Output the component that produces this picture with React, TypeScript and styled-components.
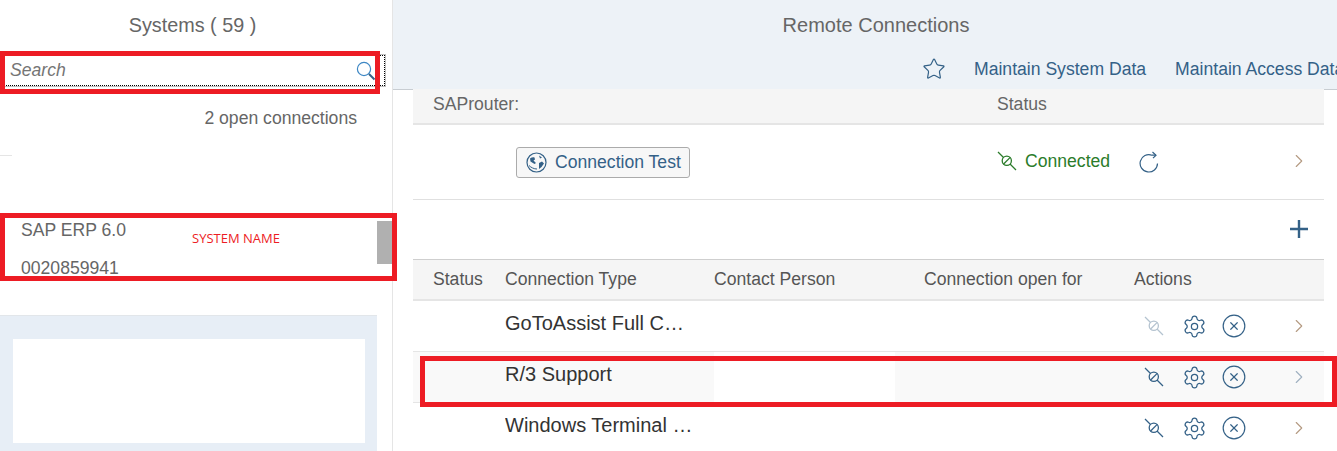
import React from 'react';
import styled, { createGlobalStyle } from 'styled-components';
import { Settings, CircleX, ChevronRight, Star } from 'lucide-react';

const GlobalStyle = createGlobalStyle`
  html, body {
    margin: 0;
    padding: 0;
    background: #fff;
    font-family: "Liberation Sans", Arial, sans-serif;
  }
`;

const Page = styled.div`
  display: grid;
  grid-template-columns: 393px 1fr;
  grid-template-rows: 451px;
  width: 1337px;
  height: 451px;
  overflow: hidden;
  position: relative;
`;

const LeftPanel = styled.div`
  border-right: 1px solid #e5e5e5;
  display: flex;
  flex-direction: column;
  min-width: 0;
`;

const LeftTitle = styled.div`
  height: 50px;
  padding-right: 7px;
  display: flex;
  align-items: center;
  justify-content: center;
  font-size: 19.8px;
  color: #666;
`;

const SearchRow = styled.div`
  position: relative;
  margin: 4px 6px 0 0;
  height: 31px;
  border: 1px solid #bfbfbf;
  border-left: none;
  outline: 1px dotted #000;
  outline-offset: -2px;
  display: flex;
  align-items: center;
  justify-content: space-between;
  padding: 0 9px 0 10px;
`;

const SearchText = styled.span`
  font-size: 17.6px;
  font-style: italic;
  color: #757575;
`;

const OpenCount = styled.div`
  margin-top: 21px;
  padding-right: 35px;
  text-align: right;
  font-size: 17.6px;
  line-height: 20px;
  color: #666;
`;

const ShortRule = styled.div`
  width: 12px;
  height: 1px;
  margin-top: 27px;
  background: #e5e5e5;
`;

const SystemItem = styled.div`
  position: relative;
  margin-top: 65px;
  height: 94px;
  display: flex;
  justify-content: space-between;
  align-items: flex-start;
`;

const SystemText = styled.div`
  padding-left: 21px;
  font-size: 17.6px;
  line-height: 38px;
  color: #666;
  margin-top: -10px;
`;

const ScrollThumb = styled.div`
  width: 15px;
  height: 43px;
  background: #b0b0b0;
`;

const Preview = styled.div`
  width: 377px;
  flex: 1;
  box-sizing: border-box;
  border-top: 1px solid #e2e6ea;
  background: #e7eef6;
  padding: 23px 12px 8px 13px;
  display: flex;
`;

const PreviewCard = styled.div`
  flex: 1;
  background: #fff;
`;

const RightPanel = styled.div`
  display: flex;
  flex-direction: column;
  min-width: 0;
  overflow: hidden;
`;

const RightHeader = styled.div`
  height: 90px;
  box-sizing: border-box;
  flex: none;
  background: #edf2f7;
  border-bottom: 1px solid #c8cdd2;
  display: flex;
  flex-direction: column;
`;

const RightTitle = styled.div`
  height: 50px;
  padding-left: 22px;
  display: flex;
  align-items: center;
  justify-content: center;
  font-size: 20px;
  color: #666;
`;

const Toolbar = styled.div`
  display: flex;
  align-items: center;
  height: 38px;
  padding-left: 529px;
  gap: 29px;
  white-space: nowrap;
`;

const ToolLink = styled.span`
  flex: none;
  font-size: 17.6px;
  color: #346187;
`;

const StarIcon = styled(Star)`
  flex: none;
  width: 24px;
  height: 24px;
  color: #346187;
  margin-right: -1px;
`;

const Content = styled.div`
  margin: 0 13px 0 20px;
  display: flex;
  flex-direction: column;
`;

const RouterHead = styled.div`
  height: 30px;
  padding: 0 0 4px 20px;
  background: #f5f5f5;
  border-bottom: 2px solid #e5e5e5;
  display: grid;
  grid-template-columns: 564px 1fr;
  align-items: center;
  font-size: 17.6px;
  color: #666;
  margin-top: -1px;
`;

const RouterRow = styled.div`
  height: 74px;
  border-bottom: 1px solid #e0e0e0;
  display: grid;
  grid-template-columns: 564px 142px 1fr auto;
  align-items: center;
  padding: 0 14px 0 20px;
`;

const TestButton = styled.div`
  margin-left: 83px;
  width: fit-content;
  height: 31px;
  box-sizing: border-box;
  padding: 0 8px 0 9px;
  border: 1px solid #ababab;
  border-radius: 3px;
  background: #f7f7f7;
  display: flex;
  align-items: center;
  gap: 8px;
  font-size: 17.6px;
  color: #346187;
`;

const StatusText = styled.div`
  display: flex;
  align-items: center;
  gap: 8px;
  padding-bottom: 2px;
  font-size: 17.6px;
  color: #2b7c2b;
`;

const AddRow = styled.div`
  height: 57px;
  display: flex;
  align-items: center;
  justify-content: flex-end;
  padding: 0 16px 2px 0;
  border-bottom: 1px solid #cfcfcf;
`;

const columns = '92px 209px 210px 210px 1fr';

const TableHead = styled.div`
  height: 39px;
  background: #f5f5f5;
  border-bottom: 2px solid #e5e5e5;
  display: grid;
  grid-template-columns: ${columns};
  align-items: center;
  font-size: 17.6px;
  color: #555;
`;

const HeadCell = styled.div<{ $first?: boolean }>`
  padding-left: ${(p) => (p.$first ? '20px' : '0')};
`;

const Row = styled.div<{ $active?: boolean }>`
  height: 51px;
  box-sizing: border-box;
  flex: none;
  background: ${(p) => (p.$active ? '#f9f9f9' : '#fff')};
  border-bottom: 1px solid #e5e5e5;
  display: grid;
  grid-template-columns: ${columns};
`;

const TypeCell = styled.div`
  grid-column: 2;
  width: 189px;
  padding-top: 10px;
  font-size: 20px;
  line-height: 24px;
  color: #333;
  white-space: nowrap;
  overflow: hidden;
  text-overflow: ellipsis;
`;

const ContactCell = styled.div<{ $blank?: boolean }>`
  width: 181px;
  background: ${(p) => (p.$blank ? '#fff' : 'transparent')};
`;

const ActionCell = styled.div`
  grid-column: 5;
  display: flex;
  align-items: center;
`;

const ActionSlot = styled.div`
  width: 40px;
  display: flex;
  justify-content: center;
  color: #346187;
`;

const Chevron = styled(ChevronRight)<{ $tone?: string }>`
  flex: none;
  width: 22px;
  height: 22px;
  color: ${(p) => p.$tone || '#b49a82'};
  stroke-width: 1.2;
`;

const RouterChevron = styled(Chevron)`
  margin-bottom: 2px;
`;

const ChevronSlot = styled.div`
  margin-left: 34px;
  display: flex;
`;

const Mark = styled.div`
  position: absolute;
  box-sizing: border-box;
  border: 5px solid #ed1c24;
  pointer-events: none;
`;

const SearchMark = styled(Mark)`
  left: 0;
  top: 51px;
  width: 380px;
  height: 43px;
`;

const SystemMark = styled(Mark)`
  left: 0;
  top: 213px;
  width: 397px;
  height: 68px;
`;

const RowMark = styled(Mark)`
  left: 420px;
  top: 356px;
  width: 917px;
  height: 51px;
`;

const SystemLabel = styled.span`
  position: absolute;
  left: 192px;
  top: 230px;
  font-family: "Open Sans", sans-serif;
  font-size: 13px;
  line-height: 17px;
  color: #ed1c24;
`;

const SearchIcon = () => (
  <svg width="20" height="20" viewBox="0 0 20 20" fill="none">
    <circle cx="8" cy="8" r="6.6" stroke="#3d87c4" strokeWidth="1.2" />
    <path d="M13 13l5.5 5.5" stroke="#346187" strokeWidth="2" />
  </svg>
);

const PlugIcon = ({ color = '#346187' }: { color?: string }) => (
  <svg width="20" height="20" viewBox="0 0 20 20" fill="none" stroke={color} strokeWidth="1.3">
    <path d="M1 1l5.5 5.5M13 13l6 6" />
    <circle cx="9.8" cy="9.8" r="4.6" />
    <path d="M6.4 13.2L13.2 6.4" />
  </svg>
);

const GlobeIcon = () => (
  <svg width="21" height="21" viewBox="0 0 21 21" fill="none">
    <circle cx="10.5" cy="10.5" r="9.5" stroke="#346187" strokeWidth="1.2" />
    <path d="M4 6.5c1.5-1 3-1.5 4.5-1l.5 2-1.5 1 2.5 2.5-1.5 1-4-2.5z" fill="#346187" />
    <path d="M13 3.5l3 2-2 1zM13 11l3-1.5 2 2-2.5 3.5-2.5 2z" fill="#346187" />
    <path d="M3 13.5c2 2 5 3.5 8 3.5" stroke="#346187" strokeWidth="1" />
  </svg>
);

const RefreshIcon = () => (
  <svg width="20" height="22" viewBox="0 0 20 22" fill="none" stroke="#346187" strokeWidth="1.2">
    <path d="M18.5 12.5a8.7 8.7 0 1 1-5.5-8.3h4" />
    <path d="M13.5 1l3.5 3.2-3 3" />
  </svg>
);

const PlusIcon = () => (
  <svg width="18" height="18" viewBox="0 0 18 18" fill="none" stroke="#346187" strokeWidth="2.4">
    <path d="M9 0v18M0 9h18" />
  </svg>
);

const connections = [
  { name: 'GoToAssist Full Control', plug: '#b4c3d0' },
  { name: 'R/3 Support', active: true, tone: '#9fb0c0' },
  { name: 'Windows Terminal Server' },
];

export default function App() {
  return (
    <Page>
      <GlobalStyle />
      <LeftPanel>
        <LeftTitle>Systems ( 59 )</LeftTitle>
        <SearchRow>
          <SearchText>Search</SearchText>
          <SearchIcon />
        </SearchRow>
        <OpenCount>2 open connections</OpenCount>
        <ShortRule />
        <SystemItem>
          <SystemText>
            <div>SAP ERP 6.0</div>
            <div>0020859941</div>
          </SystemText>
          <ScrollThumb />
        </SystemItem>
        <Preview>
          <PreviewCard />
        </Preview>
      </LeftPanel>
      <RightPanel>
        <RightHeader>
          <RightTitle>Remote Connections</RightTitle>
          <Toolbar>
            <StarIcon strokeWidth={1.2} />
            <ToolLink>Maintain System Data</ToolLink>
            <ToolLink>Maintain Access Data</ToolLink>
          </Toolbar>
        </RightHeader>
        <Content>
          <RouterHead>
            <span>SAProuter:</span>
            <span>Status</span>
          </RouterHead>
          <RouterRow>
            <TestButton>
              <GlobeIcon />
              Connection Test
            </TestButton>
            <StatusText>
              <PlugIcon color="#2b7c2b" />
              Connected
            </StatusText>
            <RefreshIcon />
            <RouterChevron />
          </RouterRow>
          <AddRow>
            <PlusIcon />
          </AddRow>
          <TableHead>
            <HeadCell $first>Status</HeadCell>
            <HeadCell>Connection Type</HeadCell>
            <HeadCell>Contact Person</HeadCell>
            <HeadCell>Connection open for</HeadCell>
            <HeadCell>Actions</HeadCell>
          </TableHead>
          {connections.map((c) => (
            <Row key={c.name} $active={c.active}>
              <TypeCell>{c.name}</TypeCell>
              <ContactCell $blank={c.active} />
              <ActionCell>
                <ActionSlot>
                  <PlugIcon color={c.plug} />
                </ActionSlot>
                <ActionSlot>
                  <Settings size={25} strokeWidth={1.2} />
                </ActionSlot>
                <ActionSlot>
                  <CircleX size={26} strokeWidth={1.1} />
                </ActionSlot>
                <ChevronSlot>
                  <Chevron $tone={c.tone} />
                </ChevronSlot>
              </ActionCell>
            </Row>
          ))}
        </Content>
      </RightPanel>
      <SearchMark />
      <SystemMark />
      <RowMark />
      <SystemLabel>SYSTEM NAME</SystemLabel>
    </Page>
  );
}
